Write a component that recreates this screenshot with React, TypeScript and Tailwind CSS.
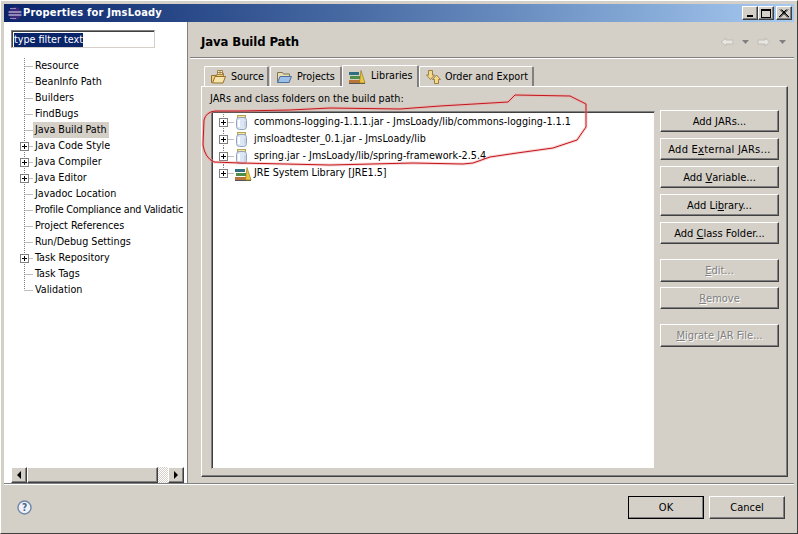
// App.tsx
import React from "react";

const font = "font-['DejaVu_Sans_Condensed','Liberation_Sans',sans-serif]";

const PlusBox = ({ x, y }: { x: number; y: number }) => (
  <g>
    <rect x={x + 0.5} y={y + 0.5} width={8} height={8} fill="#fff" stroke="#808080" />
    <path d={`M${x + 2} ${y + 4.5}h5M${x + 4.5} ${y + 2}v5`} stroke="#000" />
  </g>
);

// connector lines + expand box of one tree row
const TreeLine = ({
  plus,
  last,
  height = 16,
  width = 14,
}: {
  plus?: boolean;
  last?: boolean;
  height?: number;
  width?: number;
}) => (
  <svg width={width} height={height} className="shrink-0">
    <path
      d={`M5.5 0V${last ? height / 2 : height}M5.5 ${Math.floor(height / 2) + 0.5}H${width}`}
      stroke="#808080"
      strokeDasharray="1 1"
      fill="none"
    />
    {plus && <PlusBox x={1} y={Math.floor(height / 2) - 4} />}
  </svg>
);

const JarIcon = () => (
  <svg width="14" height="16" className="shrink-0">
    <rect x="3.5" y="0.5" width="8" height="2" fill="#f2e6a6" stroke="#b8a24e" />
    <rect x="2.5" y="2.5" width="10" height="12" rx="3" fill="#dce6f4" stroke="#8fa2bf" />
    <path d="M5 5v7" stroke="#fff" strokeWidth="2" />
    <path d="M11 6v6" stroke="#b9c9e0" />
  </svg>
);

const LibIcon = ({ className = "" }: { className?: string }) => (
  <svg width="18" height="16" className={`shrink-0 ${className}`}>
    <rect x="1" y="3" width="10" height="3" fill="#2f6f80" />
    <rect x="2" y="7" width="10" height="3" fill="#4f8f4a" />
    <rect x="1" y="11" width="11" height="3" fill="#b9743a" />
    <path d="M1 14.5H17" stroke="#555" />
    <path d="M11.5 14 13 1.5l4 12.500z" fill="#ecc840" stroke="#9a7a18" strokeWidth="0.7" />
  </svg>
);

const SourceIcon = () => (
  <svg width="16" height="16" className="shrink-0">
    <path d="M1.500 6.500h5l1-2h6l-1 9h-11z" fill="#f0cf80" stroke="#94702c" />
    <path d="M2.500 14 5 7.500H15.500L13 14z" fill="#f8e4a8" stroke="#94702c" />
    <path d="M7.500 1.500h5v4h-5zM10 1.500v4M7.500 3.500h5" fill="#f8f0d0" stroke="#94702c" strokeWidth="0.8" />
  </svg>
);

const ProjectIcon = () => (
  <svg width="16" height="16" className="shrink-0">
    <path d="M1.500 3.500h5l1 1.500h6v8h-12z" fill="#e6dcb8" stroke="#7d7450" />
    <path d="M1.500 13.500 4 7.500h11.500l-2.500 6z" fill="#9cc0e8" stroke="#4f6f9f" />
  </svg>
);

const OrderIcon = () => (
  <svg width="16" height="16" className="shrink-0 -mr-[1px]">
    <path d="M1.500 6h2V1.500h4V6h2L5.500 10.500z" fill="#f3d98a" stroke="#8a6a28" strokeWidth="0.8" />
    <path d="M7.500 10.500h2v4h4v-4h2L11.500 6z" fill="#f3d98a" stroke="#8a6a28" strokeWidth="0.8" />
  </svg>
);

const raised =
  "border border-t-white border-l-white border-r-[#404040] border-b-[#404040] shadow-[inset_-1px_-1px_0_#808080]";

const Btn = ({
  children,
  disabled,
  className = "",
}: {
  children: React.ReactNode;
  disabled?: boolean;
  className?: string;
}) => (
  <button
    className={`${raised} bg-[#d4d0c8] text-[11px] leading-none whitespace-pre flex items-center justify-center ${
      disabled ? "text-[#808080] [text-shadow:1px_1px_0_#fff]" : "text-black"
    } ${className}`}
  >
    {children}
  </button>
);

const Tab = ({
  icon,
  label,
  active,
  className = "",
}: {
  icon: React.ReactNode;
  label: string;
  active?: boolean;
  className?: string;
}) => (
  <div
    className={`flex items-center gap-[5px] whitespace-nowrap border-t border-l border-r-2 border-t-white border-l-white border-r-[#808080] rounded-t-[2px] px-[5px] ${
      active ? "h-[22px] bg-[#d4d0c8] z-10 -mb-px" : "h-[20px] pt-[1px]"
    } ${className}`}
  >
    {icon}
    <span>{label}</span>
  </div>
);

const prefs: [string, boolean?][] = [
  ["Resource"],
  ["BeanInfo Path"],
  ["Builders"],
  ["FindBugs"],
  ["Java Build Path"],
  ["Java Code Style", true],
  ["Java Compiler", true],
  ["Java Editor", true],
  ["Javadoc Location"],
  ["Profile Compliance and Validatic"],
  ["Project References"],
  ["Run/Debug Settings"],
  ["Task Repository", true],
  ["Task Tags"],
  ["Validation"],
];

const jars = [
  "commons-logging-1.1.1.jar - JmsLoady/lib/commons-logging-1.1.1",
  "jmsloadtester_0.1.jar - JmsLoady/lib",
  "spring.jar - JmsLoady/lib/spring-framework-2.5.4",
];

const inkPath =
  "M240 111L215 111Q206 112 204 120L203 145Q205 158 214 162L240 163L330 165L413 163L463 164L473 163L490 157L517 153L553 148L577 140L586 127L586 104L570 96L515 95L508 102L440 106L400 109L330 108L290 110L240 111";

export default function App() {
  return (
    <div
      className={`${font} relative w-[798px] h-[534px] bg-[#d4d0c8] text-[10.7px] text-black overflow-hidden flex flex-col px-[3px] pt-[3px] pb-[2px] border border-t-white border-l-white border-b-[#404040] border-r-[#404040]`}
    >
      {/* title bar */}
      <div className="h-[18px] shrink-0 bg-gradient-to-r from-[#0a246a] to-[#a6caf0] flex items-center pl-[3px] pr-[2px]">
        <svg width="15" height="15" className="shrink-0 mr-[1px]">
          <circle cx="8" cy="7.500" r="6.500" fill="#3a2a78" />
          <path d="M1.500 6h13M1.500 9h13" stroke="#e8e4f4" strokeWidth="1.200" />
          <path d="M3 2.500h6M3 12.500h6" stroke="#8f86c4" />
        </svg>
        <span className="text-white font-bold text-[11px] tracking-[0.2px]">Properties for JmsLoady</span>
        <div className="ml-auto flex items-center">
          <div className={`${raised} bg-[#d4d0c8] w-[16px] h-[14px] flex items-end justify-center pb-[2px]`}>
            <div className="w-[6px] h-[2px] bg-black" />
          </div>
          <div className={`${raised} bg-[#d4d0c8] w-[16px] h-[14px] flex items-center justify-center`}>
            <div className="w-[10px] h-[9px] border border-t-2 border-black" />
          </div>
          <div className={`${raised} bg-[#d4d0c8] w-[16px] h-[14px] ml-[2px] flex items-center justify-center`}>
            <svg width="10" height="9">
              <path d="M1 0.500 9 8.500M2.500 0.500l8 8M9 0.500 1 8.500M7.500 0.500l-8 8" stroke="#000" />
            </svg>
          </div>
        </div>
      </div>

      <div className="flex flex-1 min-h-0">
        {/* left preference tree */}
        <div className="w-[183px] bg-white shrink-0 flex flex-col pl-[7px] pr-[3px]">
          <div className="mt-[8px] w-[144px] h-[18px] border border-t-[#808080] border-l-[#808080] border-r-[#d4d0c8] border-b-[#d4d0c8] shadow-[inset_1px_1px_0_#404040] flex items-center pl-[2px] pt-[1px]">
            <span className="bg-[#0a246a] text-white leading-[14px]">type filter text</span>
          </div>
          <div className="mt-[10px] pl-[8px] flex-1">
            {prefs.map(([name, plus], i) => (
              <div key={name} className="flex h-[16px] items-center">
                <TreeLine plus={plus} last={i === prefs.length - 1} />
                <span className="whitespace-nowrap leading-[16px]">
                  <span
                    className={`inline-block px-[2px] ${name === "Java Build Path" ? "bg-[#d4d0c8]" : ""} ${
                      name.length > 30 ? "tracking-[-0.2px]" : ""
                    }`}
                  >
                    {name}
                  </span>
                </span>
              </div>
            ))}
          </div>
          {/* horizontal scrollbar */}
          <div className="h-[16px] flex shrink-0 bg-[repeating-conic-gradient(#d4d0c8_0_25%,#fff_0_50%)] bg-[length:2px_2px]">
            <div className={`${raised} bg-[#d4d0c8] w-[16px] flex items-center justify-center`}>
              <div className="border-y-[4px] border-y-transparent border-r-[4px] border-r-black" />
            </div>
            <div className={`${raised} bg-[#d4d0c8] w-[131px]`} />
            <div className={`${raised} bg-[#d4d0c8] w-[16px] ml-auto flex items-center justify-center`}>
              <div className="border-y-[4px] border-y-transparent border-l-[4px] border-l-black" />
            </div>
          </div>
        </div>

        {/* sash */}
        <div className="w-[3px] shrink-0 bg-[#d4d0c8] border-l border-l-[#808080]" />

        {/* right page */}
        <div className="flex-1 min-w-0 flex flex-col">
          <div className="h-[36px] shrink-0 flex items-center pl-[11px] pr-[8px] pt-[4px] border-b border-b-[#808080] shadow-[0_1px_0_#fff]">
            <span className="font-bold text-[13px] tracking-[-0.1px]">Java Build Path</span>
            <div className="ml-auto flex items-center gap-[8px]">
              <svg width="14" height="10"><path d="M1 5l5-4v2h7v4H6v2z" fill="#e8e6e0" stroke="#c0bcb4" /></svg>
              <svg width="7" height="4"><path d="M0 0h7L3.500 4z" fill="#808080" /></svg>
              <svg width="14" height="10"><path d="M13 5 8 1v2H1v4h7v2z" fill="#e8e6e0" stroke="#c0bcb4" /></svg>
              <svg width="7" height="4"><path d="M0 0h7L3.500 4z" fill="#808080" /></svg>
            </div>
          </div>

          {/* tabs */}
          <div className="pl-[11px] pr-[6px] pt-[7px] flex-1 min-h-0 flex flex-col">
            <div className="h-[21px] shrink-0 flex items-end pl-[3px]">
              <Tab icon={<SourceIcon />} label="Source" className="w-[65px]" />
              <Tab icon={<ProjectIcon />} label="Projects" className="w-[72px] ml-px" />
              <Tab icon={<LibIcon />} label="Libraries" active className="w-[77px]" />
              <Tab icon={<OrderIcon />} label="Order and Export" className="w-[115px]" />
            </div>
            <div className="flex-1 min-h-0 border border-t-white border-l-white border-r-[#404040] border-b-[#404040] shadow-[inset_-1px_-1px_0_#808080] flex flex-col mb-[6px] pl-[9px] pr-[8px]">
              <div className="h-[24px] shrink-0 flex items-center -ml-px">
                JARs and class folders on the build path:
              </div>
              <div className="flex flex-1 min-h-0 pb-[7px]">
                <div className="w-[444px] shrink-0 bg-white border border-t-[#808080] border-l-[#808080] border-r-[#d4d0c8] border-b-[#d4d0c8] shadow-[inset_1px_1px_0_#404040] pl-[6px] pt-[2px]">
                  {jars.map((j) => (
                    <div key={j} className="flex items-center h-[17px]">
                      <TreeLine plus height={17} width={16} />
                      <JarIcon />
                      <span className="ml-[6px] whitespace-nowrap">{j}</span>
                    </div>
                  ))}
                  <div className="flex items-center h-[17px]">
                    <TreeLine plus last height={17} width={16} />
                    <LibIcon />
                    <span className="ml-[2px] whitespace-nowrap">JRE System Library [JRE1.5]</span>
                  </div>
                </div>
                <div className="w-[119px] ml-[5px] shrink-0 flex flex-col">
                  <Btn className="h-[22px] mt-[-1px]">Add <u>J</u>ARs...</Btn>
                  <Btn className="h-[22px] mt-[6px] tracking-[0.25px]">Add E<u>x</u>ternal JARs...</Btn>
                  <Btn className="h-[22px] mt-[6px]">Add <u>V</u>ariable...</Btn>
                  <Btn className="h-[22px] mt-[6px]">Add Li<u>b</u>rary...</Btn>
                  <Btn className="h-[22px] mt-[6px]">Add <u>C</u>lass Folder...</Btn>
                  <Btn disabled className="h-[23px] mt-[15px]"><u>E</u>dit...</Btn>
                  <Btn disabled className="h-[22px] mt-[5px]"><u>R</u>emove</Btn>
                  <Btn disabled className="h-[23px] mt-[15px]"><u>M</u>igrate JAR File...</Btn>
                </div>
              </div>
            </div>
          </div>
        </div>
      </div>

      {/* bottom bar */}
      <div className="h-[48px] shrink-0 border-t border-t-[#808080] shadow-[inset_0_1px_0_#fff] flex items-center pl-[13px] pr-[9px]">
        <svg width="15" height="15" viewBox="0 0 15 15">
          <circle cx="7.500" cy="7.500" r="6.500" fill="#eef2f8" stroke="#6f86a8" strokeWidth="1.400" />
          <text x="7.500" y="11" textAnchor="middle" fontSize="10" fontWeight="bold" fill="#4a6488">?</text>
        </svg>
        <Btn className="ml-auto w-[76px] h-[23px] outline outline-1 outline-black -outline-offset-1">OK</Btn>
        <Btn className="ml-[5px] w-[76px] h-[23px]">Cancel</Btn>
      </div>

      {/* red ink drawn over the screenshot */}
      <svg width="798" height="534" className="absolute -left-px -top-px pointer-events-none">
        <path d={inkPath} stroke="#f0a0a0" strokeOpacity="0.45" strokeWidth="3" fill="none" />
        <path d={inkPath} stroke="#c4161c" strokeWidth="1" fill="none" />
      </svg>
    </div>
  );
}
